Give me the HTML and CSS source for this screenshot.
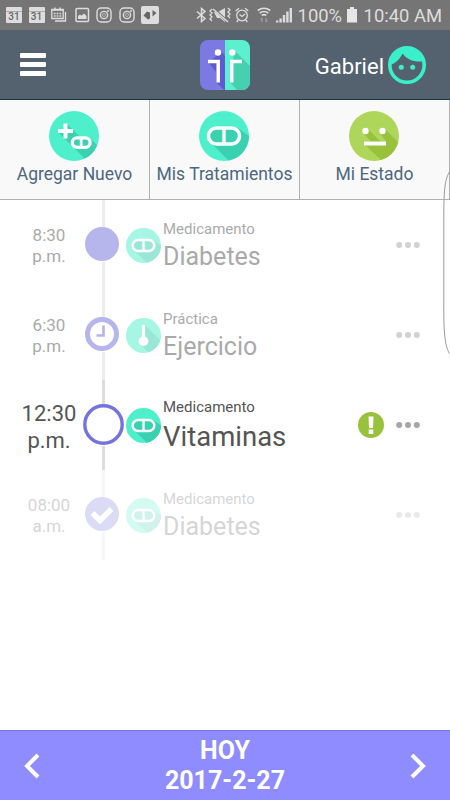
FILE: index.html
```html
<!DOCTYPE html>
<html lang="es">
<head>
<meta charset="UTF-8">
<meta name="viewport" content="width=device-width, initial-scale=1.0">
<title>Tratamientos</title>
<link rel="stylesheet" href="styles.css">
</head>
<body>

<svg class="defs" width="0" height="0">
  <clipPath id="disc"><circle cx="25" cy="25" r="25"/></clipPath>
  <clipPath id="tile"><rect width="50" height="50" rx="8"/></clipPath>
  <symbol id="camera" viewBox="0 0 16 16">
    <g fill="none" stroke="#ddd" stroke-width="1.4"><rect x="1" y="1" width="14" height="14" rx="4"/><circle cx="8" cy="8" r="3.6"/></g>
    <circle cx="8" cy="8" r="1.5" fill="none" stroke="#ddd" stroke-width=".6"/>
    <circle cx="12" cy="4" r="1" fill="#ddd"/>
  </symbol>
  <symbol id="pill" viewBox="0 0 50 50">
    <g clip-path="url(#disc)">
      <path fill="#4df0cb" d="M0 0h50v50H0z"/>
      <path fill="#3ad1b0" d="M11 31 30 50h20V25L39 17H17z"/>
      <rect x="9.5" y="17" width="31" height="16" rx="8" fill="#3ad1b0" stroke="#fff" stroke-width="3.6"/>
      <path stroke="#fff" stroke-width="3.4" d="M25 16v18"/>
    </g>
  </symbol>
  <symbol id="dots" viewBox="0 0 24 6">
    <g fill="#a6a6a6"><circle cx="3.2" cy="3" r="3"/><circle cx="12" cy="3" r="3"/><circle cx="20.8" cy="3" r="3"/></g>
  </symbol>
</svg>

<div class="status">
  <div class="status-left">
    <div class="calendar">31</div>
    <div class="calendar">31</div>
    <svg width="16" height="16" viewBox="0 0 16 16">
      <path fill="none" stroke="#ddd" stroke-width="1.3" d="M.8 2.5h11.4v9H.8zM14.5 5v9H4"/>
      <path stroke="#ddd" stroke-width="1.4" d="M.5 3h12M4 .5v2M9 .5v2"/>
      <path stroke="#ddd" stroke-width="1.5" stroke-dasharray="1.8 1" d="M2.8 6.5h8M2.8 9h8"/>
    </svg>
    <svg width="16" height="16" viewBox="0 0 16 16">
      <rect x="2" y="1.500" width="12.500" height="13" rx="1" fill="none" stroke="#ddd" stroke-width="1.500"/>
      <path fill="#ddd" d="M4 12V9l2-1.500 1.500 1.200L10 6.500 12.500 9v3z"/>
    </svg>
    <svg width="16" height="16"><use href="#camera"/></svg>
    <svg width="16" height="16"><use href="#camera"/></svg>
    <svg width="18" height="18" viewBox="0 0 18 18">
      <rect width="18" height="18" rx="2" fill="#ddd"/>
      <path fill="#666" d="M2.500 9.500 6 5.500l3 1v6l-2 1zM11.500 4l4 3-4 3.500z"/>
    </svg>
  </div>
  <div class="status-right">
    <svg width="11" height="16" viewBox="0 0 11 16"><path fill="none" stroke="#ddd" stroke-width="1.500" d="m1 4.500 8 7-3.500 3v-13l3.500 3-8 7"/></svg>
    <svg class="mute" width="22" height="16" viewBox="0 0 22 16">
      <path fill="#ddd" d="M5 5h4l7-4v14l-5-4H8z"/>
      <path stroke="#757575" stroke-width="2.500" d="m4 1 15 14"/>
      <path stroke="#ddd" stroke-width="1.500" d="m4 2 15 13"/>
      <path fill="none" stroke="#ddd" stroke-width="1.300" d="m3 2-2 2 2 2-2 2 2 2-2 2 2 2M19 1l2 2-2 2 2 2-2 2 2 2"/>
    </svg>
    <svg class="alarm" width="14" height="16" viewBox="0 0 14 16">
      <g fill="none" stroke="#ddd" stroke-width="1.300"><circle cx="7" cy="8.500" r="5.300"/><path d="m4.500 7.500 2.500 2L10 7M.7 4 4 1.200M13.300 4 10 1.200M3.200 13l-1.500 2M10.800 13l1.500 2"/></g>
    </svg>
    <svg class="wifi" width="14" height="16" viewBox="0 0 14 16">
      <path fill="none" stroke="#ddd" stroke-width="1.700" d="M.7 3.500q6.300-4.500 12.600 0M2.700 6q4.300-3 8.600 0M4.700 8.400q2.300-1.500 4.600 0"/>
      <path fill="none" stroke="#aaa" d="M5 15v-4l-1.500 1.500M9 11v4l1.500-1.500"/>
    </svg>
    <svg class="signal" width="16" height="16" viewBox="0 0 16 16"><path stroke="#ddd" stroke-width="2.400" d="M1.200 15.500v-2M4.600 15.500v-4M8 15.500V8M11.400 15.500V4.500M14.800 15.500V1"/></svg>
    <span class="percent">100%</span>
    <svg class="battery" width="10" height="16" viewBox="0 0 10 16"><path fill="#e6e6e6" d="M0 2h3V0h4v2h3v13.500H0z"/></svg>
    <span class="clock">10:40 AM</span>
  </div>
</div>

<div class="header">
  <div class="burger"><span></span><span></span><span></span></div>
  <svg class="logo" width="50" height="50" viewBox="0 0 50 50">
    <g clip-path="url(#tile)">
      <path fill="#7c7ae2" d="M0 0h25v50H0z"/>
      <path fill="#5d59d3" d="m9 23 7 9v10l8 8h1V16l-4-5z"/>
      <path fill="#5df0cf" d="M25 0h25v50H25z"/>
      <path fill="#45d1b0" d="m34 10 16 16v24H37l-7-8 3-18z"/>
      <g fill="#fff"><circle cx="18" cy="12.500" r="3.200"/><circle cx="32.300" cy="12.500" r="3.200"/></g>
      <path fill="none" stroke="#fff" stroke-width="3.500" d="M8 21.500h10.200V42.500M42 21.500H31.700V42.500"/>
    </g>
  </svg>
  <div class="user">
    <span>Gabriel</span>
    <svg width="38" height="38" viewBox="0 0 38 38">
      <circle cx="19" cy="19" r="17.200" fill="none" stroke="#3af0cb" stroke-width="3.600"/>
      <path fill="#3af0cb" d="M2 19C2 7 10 1 19 1c9 0 15 5 17 14-8 2-17-1-21.500-7.500C12 13 8 17 2 19z"/>
      <g fill="#3af0cb"><circle cx="13.300" cy="21.300" r="2.500"/><circle cx="24.700" cy="21.300" r="2.500"/></g>
    </svg>
  </div>
</div>

<div class="tabs">
  <div class="tab">
    <svg width="50" height="50" viewBox="0 0 50 50">
      <g clip-path="url(#disc)">
        <path fill="#4df0cb" d="M0 0h50v50H0z"/>
        <path fill="#3ad1b0" d="m18 13 13 13h9l10 10v14H38L10 22h8z"/>
        <path stroke="#fff" stroke-width="4" d="M16.500 12.500v15M9 20h15"/>
        <rect x="23.300" y="26.800" width="17.800" height="9.500" rx="4.700" fill="#3ad1b0" stroke="#fff" stroke-width="3.300"/>
        <path stroke="#fff" stroke-width="2.800" d="M32.200 26v11"/>
      </g>
    </svg>
    <span>Agregar Nuevo</span>
  </div>
  <div class="tab">
    <svg width="50" height="50"><use href="#pill"/></svg>
    <span>Mis Tratamientos</span>
  </div>
  <div class="tab">
    <svg width="50" height="50" viewBox="0 0 50 50">
      <g clip-path="url(#disc)">
        <path fill="#aed65b" d="M0 0h50v50H0z"/>
        <path fill="#98c23c" d="m19 18 12.500 12.500H37L31 22l5-4 14 14v18H33L15 33v-2.500h7L15 23z"/>
        <g fill="#fff"><circle cx="16.500" cy="20" r="3.200"/><circle cx="33.500" cy="20" r="3.200"/><path d="M15 30.500h22v4H15z"/></g>
      </g>
    </svg>
    <span>Mi Estado</span>
  </div>
</div>

<div class="timeline">
  <div class="row past">
    <div class="time">8:30<br>p.m.</div>
    <div class="track">
      <svg width="34" height="34" viewBox="0 0 34 34"><circle cx="17" cy="17" r="17" fill="#6f6ddb"/></svg>
    </div>
    <svg class="kind" width="35" height="35"><use href="#pill"/></svg>
    <div class="info"><div class="type">Medicamento</div><div class="name">Diabetes</div></div>
    <svg class="more" width="24" height="6"><use href="#dots"/></svg>
  </div>

  <div class="row past">
    <div class="time">6:30<br>p.m.</div>
    <div class="track">
      <svg width="34" height="34" viewBox="0 0 34 34">
        <g fill="none" stroke="#6f6ddb"><circle cx="17" cy="17" r="14.500" stroke-width="5"/><path stroke-width="2.600" d="M18.500 8.500v10h-7"/></g>
      </svg>
    </div>
    <svg class="kind" width="35" height="35" viewBox="0 0 50 50">
      <g clip-path="url(#disc)">
        <path fill="#4df0cb" d="M0 0h50v50H0z"/>
        <path fill="#3ad1b0" d="m27 10 23 23v17H33L20 37l5-5z"/>
        <path stroke="#fff" stroke-width="4.500" stroke-linecap="round" d="M25 12v20"/>
        <circle cx="25" cy="33" r="7" fill="#fff"/>
      </g>
    </svg>
    <div class="info"><div class="type">Práctica</div><div class="name">Ejercicio</div></div>
    <svg class="more" width="24" height="6"><use href="#dots"/></svg>
  </div>

  <div class="row current">
    <div class="time">12:30<br>p.m.</div>
    <div class="track">
      <svg width="41" height="41" viewBox="0 0 41 41"><circle cx="20.500" cy="20.500" r="18.700" fill="#fff" stroke="#7573de" stroke-width="3.400"/></svg>
    </div>
    <svg class="kind" width="35" height="35"><use href="#pill"/></svg>
    <div class="info"><div class="type">Medicamento</div><div class="name">Vitaminas</div></div>
    <svg class="alert" width="26" height="26" viewBox="0 0 26 26">
      <circle cx="13" cy="13" r="13" fill="#98c23c"/>
      <path fill="#fff" d="M10.500 4.500h5l-.5 11.500h-4zM10.700 17.500h4.600V22h-4.600z"/>
    </svg>
    <svg class="more" width="24" height="6"><use href="#dots"/></svg>
  </div>

  <div class="row done">
    <div class="time">08:00<br>a.m.</div>
    <div class="track">
      <svg width="34" height="34" viewBox="0 0 34 34">
        <circle cx="17" cy="17" r="17" fill="#6f6ddb"/>
        <path fill="none" stroke="#fff" stroke-width="5.500" d="m7.500 16 7.500 7.500L26.500 12"/>
      </svg>
    </div>
    <svg class="kind" width="35" height="35"><use href="#pill"/></svg>
    <div class="info"><div class="type">Medicamento</div><div class="name">Diabetes</div></div>
    <svg class="more" width="24" height="6"><use href="#dots"/></svg>
  </div>
</div>

<div class="footer">
  <svg width="16" height="26" viewBox="0 0 16 26"><path fill="none" stroke="#fff" stroke-width="4" d="M14 2 3 13l11 11"/></svg>
  <div class="date">HOY<br>2017-2-27</div>
  <svg width="16" height="26" viewBox="0 0 16 26"><path fill="none" stroke="#fff" stroke-width="4" d="m2 2 11 11L2 24"/></svg>
</div>

<!-- edge panel handle -->
<svg class="edge" width="7" height="186" viewBox="0 0 7 186"><path fill="none" stroke="#999" d="M7 1C2 8 .8 20 .8 45v95C.8 162 2 178 7 184"/></svg>

</body>
</html>
```
FILE: styles.css
```css
* {
  box-sizing: border-box;
}
body {
  margin: 0;
  width: 450px;
  height: 800px;
  display: flex;
  flex-direction: column;
  position: relative;
  overflow: hidden;
  background-color: #fff;
  font-family: Roboto, "Liberation Sans", sans-serif;
}
svg {
  display: block;
  flex: none;
}
.defs {
  position: absolute;
}
.status {
  height: 30px;
  padding: 0 8px 0 6px;
  display: flex;
  align-items: center;
  justify-content: space-between;
  background-color: #757575;
  color: #ddd;
  font-size: 18.4px;
}
.status-left {
  display: flex;
  align-items: center;
  gap: 6.5px;
}
.status-right {
  display: flex;
  align-items: center;
}
.calendar {
  width: 16px;
  height: 16px;
  padding-top: 4px;
  background: linear-gradient(#ddd 4px, #aaa 4px, #aaa 5px, #ddd 5px);
  border-radius: 1px;
  color: #666;
  font-size: 10px;
  font-weight: 500;
  line-height: 12px;
  text-align: center;
}
.mute {
  margin-left: 2px;
}
.alarm {
  margin-left: 4px;
}
.wifi {
  margin-left: 8px;
}
.signal {
  margin: 0 6px 0 5px;
}
.percent {
  width: 46px;
}
.battery {
  margin: 0 7px 0 3px;
}
.header {
  height: 70px;
  padding: 0 24px 0 20px;
  display: grid;
  grid-template-columns: 1fr 50px 1fr;
  align-items: center;
  background-color: #54626f;
  border-bottom: 1px solid #13344b;
}
.burger {
  width: 26px;
  display: flex;
  flex-direction: column;
  gap: 4px;
}
.burger span {
  height: 5px;
  background-color: #fff;
  border-radius: 1px;
}
.logo {
  margin-left: 2px;
}
.user {
  display: flex;
  align-items: center;
  justify-content: flex-end;
  gap: 4px;
  color: #fff;
  font-size: 22px;
}
.user span {
  padding-top: 3px;
}
.tabs {
  height: 100px;
  display: grid;
  grid-template-columns: repeat(3, 1fr);
  background-color: #f9f9f9;
  border-bottom: 1px solid #b0b0b0;
}
.tab {
  display: flex;
  flex-direction: column;
  align-items: center;
  padding-top: 11px;
  border-right: 1px solid #b0b0b0;
  color: #4e6780;
  font-size: 17.5px;
  line-height: 26px;
  white-space: nowrap;
}
.tab svg {
  margin-right: 1px;
}
.timeline {
  flex: 1;
}
.row {
  height: 90px;
  padding-right: 30px;
  display: flex;
  align-items: center;
  color: #555;
}
.past {
  opacity: 0.5;
}
.done {
  opacity: 0.24;
}
.time {
  width: 83px;
  padding-left: 15px;
  padding-top: 1px;
  text-align: center;
  font-size: 17px;
  line-height: 20.5px;
}
.track {
  width: 41px;
  height: 90px;
  display: flex;
  flex-direction: column;
  align-items: center;
  gap: 1px;
}
.track svg {
  margin-right: 3px;
}
.current .track svg {
  margin-right: 0;
}
.track::before,
.track::after {
  content: "";
  flex: 1;
  width: 3px;
  background-color: #ddd;
}
.track::before {
  margin-bottom: -2px;
}
.current .track::before {
  margin-bottom: -1px;
}
.kind {
  margin-left: 2px;
}
.info {
  flex: 1;
  padding-left: 2px;
  padding-top: 5px;
}
.type {
  font-size: 15px;
  line-height: 18px;
}
.name {
  font-size: 25px;
  line-height: 38px;
}
.current .time {
  padding-top: 3px;
  font-size: 22px;
  line-height: 27px;
}
.current .name {
  font-size: 27.5px;
  line-height: 42px;
}
.alert {
  margin-right: 12px;
}
.footer {
  height: 70px;
  padding: 0 24px;
  display: flex;
  align-items: center;
  justify-content: space-between;
  background-color: #8e8cff;
  border-top: 1px solid #7b79ee;
  color: #fff;
}
.date {
  padding-top: 1px;
  text-align: center;
  font-size: 25px;
  font-weight: 700;
  line-height: 30px;
}
.edge {
  position: absolute;
  top: 170px;
  right: 0;
}
```
